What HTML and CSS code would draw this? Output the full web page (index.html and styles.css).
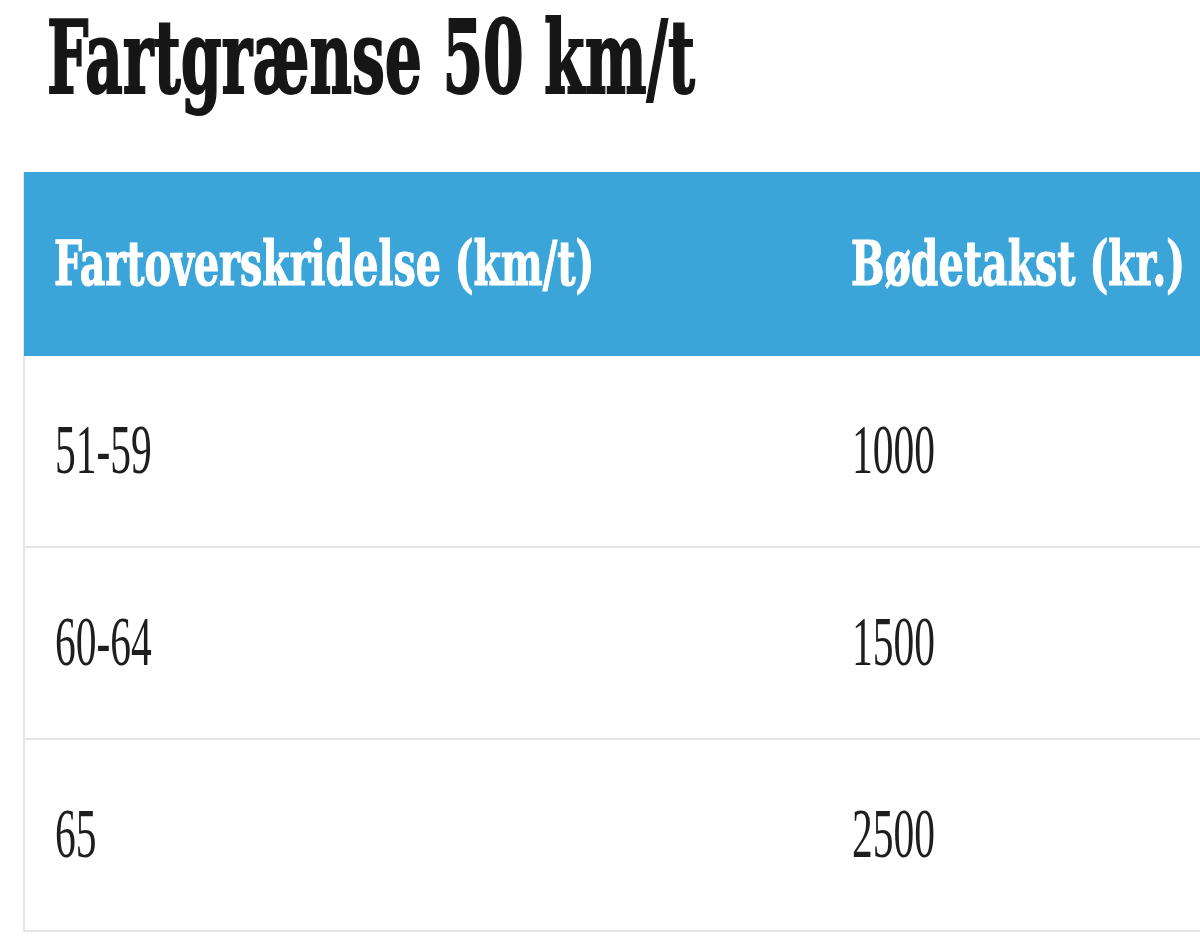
FILE: index.html
```html
<!DOCTYPE html>
<html lang="da">
<head>
<meta charset="utf-8">
<title>Fartgrænse 50 km/t</title>
<link rel="stylesheet" href="styles.css">
</head>
<body>
<h1 class="title"><span class="stretch">Fartgrænse 50 km/t</span></h1>
<div class="table">
  <div class="row head">
    <div class="cell"><span class="stretch th">Fartoverskridelse (km/t)</span></div>
    <div class="cell"><span class="stretch th">Bødetakst (kr.)</span></div>
  </div>
  <div class="row">
    <div class="cell"><span class="stretch td">51-59</span></div>
    <div class="cell"><span class="stretch td">1000</span></div>
  </div>
  <div class="row">
    <div class="cell"><span class="stretch td">60-64</span></div>
    <div class="cell"><span class="stretch td">1500</span></div>
  </div>
  <div class="row">
    <div class="cell"><span class="stretch td">65</span></div>
    <div class="cell"><span class="stretch td">2500</span></div>
  </div>
</div>
</body>
</html>
```
FILE: styles.css
```css
html, body {
  margin: 0;
  padding: 0;
  background: #ffffff;
  overflow: hidden;
}

body {
  font-family: "Liberation Serif", "Times New Roman", serif;
  color: #1c1c1c;
}

.stretch {
  display: inline-block;
  line-height: 1;
  white-space: nowrap;
}

.title {
  margin: 0;
  height: 116px;
  padding-left: 47px;
  display: flex;
  align-items: center;
}

.title .stretch {
  font-family: "DejaVu Serif", serif;
  font-stretch: condensed;
  font-weight: 700;
  font-size: 65px;
  color: #161616;
  -webkit-text-stroke: 1.2px #161616;
  transform: scaleY(1.54);
}

.table {
  margin-top: 56px;
  margin-left: 23px;
  border-left: 2px solid #e6e6e6;
}

.row {
  display: grid;
  grid-template-columns: 797px 1fr;
  align-items: center;
  height: 192px;
  box-sizing: border-box;
  border-bottom: 2px solid #e6e6e6;
}

.head {
  height: 184px;
  background: #3ba5da;
  border-bottom: none;
  margin-left: -1px;
}

.cell {
  padding-left: 30px;
  min-width: 0;
}

.th {
  font-family: "DejaVu Serif", serif;
  font-stretch: condensed;
  font-weight: 700;
  font-size: 44px;
  color: #ffffff;
  -webkit-text-stroke: 0.8px #ffffff;
  transform: scaleY(1.39);
}

.td {
  font-size: 41.5px;
  color: #1e1e1e;
  transform: scaleY(1.68);
}
```
